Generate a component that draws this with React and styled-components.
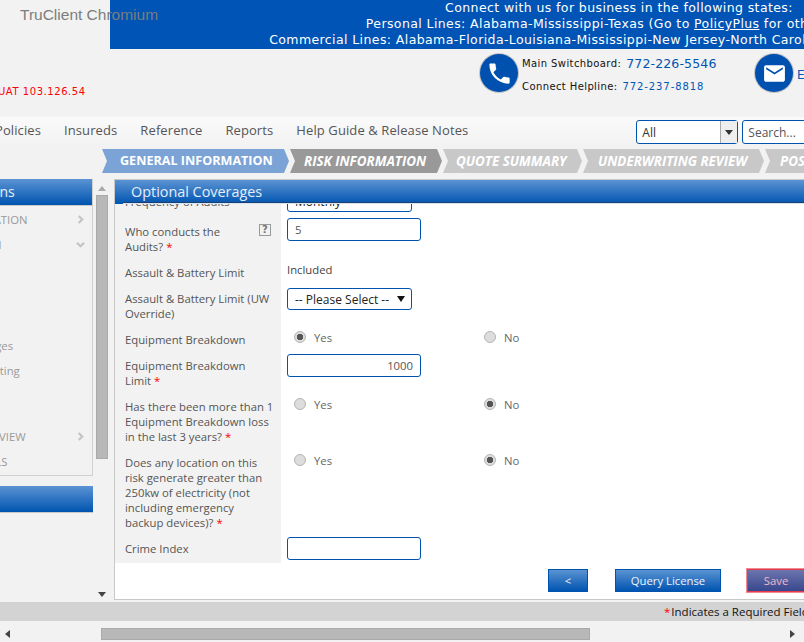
import styled, { createGlobalStyle } from "styled-components";
import { MdPhone, MdEmail } from "react-icons/md";

const GlobalStyle = createGlobalStyle`
  html, body { margin: 0; padding: 0; background: #f2f2f2; overflow: hidden; }
  * { box-sizing: border-box; }
`;

const Viewport = styled.div`
  position: relative;
  width: 804px;
  height: 642px;
  overflow: hidden;
  display: flex;
  flex-direction: column;
  background: #f2f2f2;
  font-family: "Open Sans", sans-serif;
`;
const Page = styled.div`
  width: 1274px;
  margin-left: -141px;
  flex: none;
`;
const WindowTitle = styled.div`
  position: absolute;
  left: 20px;
  top: 5px;
  font: 15.5px/20px "Liberation Sans", sans-serif;
  color: #7d7d7d;
`;
const BannerRow = styled.div`
  display: flex;
  justify-content: flex-end;
`;
const Banner = styled.div`
  width: 1023px;
  height: 49px;
  padding-right: 5px;
  background: #0054b5;
  color: #fff;
  text-align: center;
  font: 12.5px/16px "DejaVu Sans", sans-serif;
  letter-spacing: 0.4px;
  white-space: nowrap;
  a { color: #fff; text-decoration: underline; }
`;
const Band = styled.div`
  height: 68px;
  display: flex;
  padding-left: 139px;
`;
const UatTag = styled.div`
  width: 482px;
  padding-top: 36px;
  font: 10px/13px "DejaVu Sans", sans-serif;
  letter-spacing: 0.55px;
  color: #f00;
`;
const Circle = styled.div`
  width: 38px;
  height: 38px;
  margin-top: 5px;
  border-radius: 50%;
  background: #0050b0;
  box-shadow: 0 0 0 1px #c4c4c4;
  color: #fff;
  display: flex;
  align-items: center;
  justify-content: center;
  flex: none;
`;
const ContactLines = styled.div`
  width: 237px;
  padding: 3px 0 0 4px;
  font: 10px/23px "DejaVu Sans", sans-serif;
  letter-spacing: 0.4px;
  color: #111;
`;
const ContactLine = styled.div`
  display: flex;
  align-items: center;
  gap: 5px;
  white-space: nowrap;
`;
const PhoneNumber = styled.span`
  color: #0054b5;
  font-size: ${(p) => (p.$large ? "12.5px" : "10px")};
  letter-spacing: ${(p) => (p.$large ? "0.15px" : "0.9px")};
`;
const EmailLink = styled.div`
  padding: 18px 0 0 4px;
  font: 12px/16px "DejaVu Sans", sans-serif;
  color: #0054b5;
`;
const Nav = styled.div`
  height: 30px;
  display: flex;
  align-items: center;
  background: linear-gradient(#fafafa, #f2f2f2);
  padding-left: 136px;
`;
const NavItem = styled.div`
  padding-bottom: 4px;
  font-size: 13px;
  letter-spacing: 0.1px;
  color: #555;
  margin-right: 23px;
  white-space: nowrap;
`;
const NavSelect = styled.div`
  width: 102px;
  height: 24px;
  margin-left: 145px;
  display: flex;
  align-items: stretch;
  background: #fff;
  border: 1px solid #0054b0;
  border-radius: 3px;
  font-size: 12px;
  color: #333;
`;
const NavSelectText = styled.div`
  flex: 1;
  padding: 3px 5px;
`;
const NavSelectArrow = styled.div`
  width: 17px;
  background: #eee;
  border-left: 1px solid #aaa;
  display: flex;
  align-items: center;
  justify-content: center;
  &::after {
    content: "";
    border: 4px solid transparent;
    border-top: 5px solid #333;
    border-bottom: 0;
  }
`;
const SearchBox = styled.div`
  width: 120px;
  height: 24px;
  margin-left: 4px;
  padding: 3px 5px;
  background: #fff;
  border: 1px solid #0054b0;
  border-radius: 3px;
  font-size: 12px;
  color: #555;
`;
const Steps = styled.div`
  height: 24px;
  margin-top: 2px;
  padding-left: 243px;
  display: flex;
  gap: 1px;
`;
const Step = styled.div`
  width: ${(p) => p.$width}px;
  padding-left: ${(p) => p.$indent}px;
  background: ${(p) => p.$color};
  clip-path: polygon(0 0, calc(100% - 5px) 0, 100% 50%, calc(100% - 5px) 100%, 0 100%, 5px 50%);
  color: #fff;
  font-size: ${(p) => (p.$plain ? "12.6px" : "13.4px")};
  line-height: 24px;
  font-weight: 700;
  font-style: ${(p) => (p.$plain ? "normal" : "italic")};
  white-space: nowrap;
`;
const Main = styled.div`
  display: flex;
  margin-top: 6px;
  height: 421px;
`;
const Sidebar = styled.div`
  width: 234px;
  flex: none;
`;
const SideCard = styled.div`
  height: 297px;
  background: #f2f2f2;
  border-right: 1px solid #d0d0d0;
  border-bottom: 1px solid #d0d0d0;
`;
const SideHeader = styled.div`
  height: 27px;
  padding-left: 60px;
  background: linear-gradient(#5b93d3, #0054b0);
  border-bottom: 1px solid #c8c8c8;
  color: #e8f0fa;
  font-size: 14px;
  line-height: 26px;
  white-space: nowrap;
`;
const SideList = styled.div`
  padding-top: 1px;
`;
const SideItem = styled.div`
  height: 25px;
  margin-top: ${(p) => p.$gap || 0}px;
  padding: 0 7px 0 ${(p) => (p.$sub ? 51 : 39)}px;
  display: flex;
  align-items: center;
  justify-content: space-between;
  font-size: 11.3px;
  color: #999;
  white-space: nowrap;
`;
const Chevron = styled.svg`
  width: 9px;
  height: 9px;
  fill: none;
  stroke: #c4c4c4;
  stroke-width: 2.4;
`;
const SideSpacer = styled.div`
  height: 10px;
`;
const ScrollRail = styled.div`
  width: 21px;
  flex: none;
  padding: 7px 6px 0 2px;
  display: flex;
  flex-direction: column;
  align-items: center;
`;
const ArrowUp = styled.div`
  border: 4px solid transparent;
  border-bottom: 5px solid #aaa;
  border-top: 0;
`;
const ArrowDown = styled.div`
  margin-top: 133px;
  border: 4px solid transparent;
  border-top: 5px solid #444;
  border-bottom: 0;
`;
const RailThumb = styled.div`
  width: 12px;
  height: 264px;
  margin-top: 4px;
  background: #b8b8b8;
  border: 1px solid #aaa;
`;
const Panel = styled.div`
  flex: 1;
  display: flex;
  flex-direction: column;
  background: #fff;
  border: 1px solid #c8c8c8;
  border-width: 1px 0 1px 1px;
`;
const PanelHeader = styled.div`
  height: 24px;
  flex: none;
  padding-left: 8px;
  background: linear-gradient(#5b93d3, #0054b0);
`;
const PanelTitle = styled.div`
  height: 23px;
  padding-left: 8px;
  border-bottom: 1px solid #1c3f6e;
  box-shadow: 0 1px 0 #d8e4f2;
  color: #e4eefa;
  font-size: 14.4px;
  line-height: 24px;
`;
const FormClip = styled.div`
  height: 359px;
  flex: none;
  overflow: hidden;
`;
const Form = styled.div`
  margin-top: -15px;
  width: 700px;
`;
const Row = styled.div`
  display: grid;
  grid-template-columns: 166px 1fr;
`;
const LabelCell = styled.div`
  display: flex;
  justify-content: space-between;
  align-items: flex-start;
  background: #f2f2f2;
  padding: 5px 5px ${(p) => p.$bottom || 6}px 10px;
  font-size: 11.3px;
  line-height: 15px;
  color: #555;
`;
const LabelText = styled.div`
  max-width: ${(p) => (p.$max ? `${p.$max}px` : "none")};
`;
const Required = styled.span`
  color: #f00;
  margin-left: 3px;
`;
const HelpBox = styled.div`
  width: 12px;
  height: 12px;
  margin: 0 5px 0 0;
  border: 1px solid #999;
  color: #777;
  font: bold 10px/10px "DejaVu Sans", sans-serif;
  text-align: center;
`;
const FieldCell = styled.div`
  padding: ${(p) => p.$top || 0}px 0 0 6px;
  margin-top: ${(p) => p.$shift || 0}px;
`;
const TextBox = styled.div`
  width: 134px;
  height: 23px;
  padding: 0 7px 0 7px;
  background: #fff;
  border: 1px solid #0054b0;
  border-radius: 3px;
  font-size: 11.3px;
  line-height: 21px;
  color: #555;
  text-align: ${(p) => (p.$right ? "right" : "left")};
`;
const SelectBox = styled.div`
  width: 125px;
  height: 22px;
  padding: 0 6px 0 7px;
  display: flex;
  align-items: center;
  justify-content: space-between;
  background: #fff;
  border: 1px solid #0054b0;
  border-radius: 3px;
  font-size: 12px;
  color: #222;
  &::after {
    content: "";
    border: 4px solid transparent;
    border-top: 6px solid #111;
    border-bottom: 0;
  }
`;
const StaticValue = styled.div`
  font-size: 11.3px;
  line-height: 18px;
  color: #444;
`;
const RadioRow = styled.div`
  display: flex;
  align-items: center;
  height: 20px;
`;
const RadioOption = styled.div`
  width: 190px;
  padding-left: 7px;
  display: flex;
  align-items: center;
  gap: 8px;
  font-size: 11.3px;
  color: #666;
`;
const RadioDot = styled.div`
  width: 12px;
  height: 12px;
  border-radius: 50%;
  background: ${(p) => (p.$on ? "radial-gradient(#555 0 3px, #ddd 3.5px)" : "#ddd")};
  border: 1px solid #b4b4b4;
`;
const Actions = styled.div`
  flex: none;
  display: flex;
  padding: 6px 0 0 433px;
`;
const ActionButton = styled.div`
  width: ${(p) => p.$width}px;
  height: 23px;
  margin-right: ${(p) => p.$gap || 0}px;
  background: ${(p) => (p.$active ? "linear-gradient(#6b75ad, #38478e)" : "linear-gradient(#5b93d3, #0054b0)")};
  border: 1px solid ${(p) => (p.$active ? "#e8394a" : "#0054b0")};
  outline: ${(p) => (p.$active ? "1px solid #f08a92" : "none")};
  color: ${(p) => (p.$active ? "#f2b8c4" : "#eef4fb")};
  font-size: 11.3px;
  line-height: 21px;
  text-align: center;
`;
const RequiredBar = styled.div`
  height: 19px;
  margin-top: 2px;
  padding-left: 802px;
  display: flex;
  gap: 1px;
  background: #d3d3d3;
  font-size: 11.5px;
  line-height: 19px;
  color: #111;
  white-space: nowrap;
`;
const HScroll = styled.div`
  height: 21px;
  padding-top: 5px;
  display: flex;
  align-items: center;
`;
const ArrowLeft = styled.div`
  margin-left: 5px;
  border: 4px solid transparent;
  border-right: 5px solid #444;
  border-left: 0;
`;
const HThumb = styled.div`
  width: 489px;
  height: 12px;
  margin-left: 91px;
  background: #b8b8b8;
  border: 1px solid #aaa;
`;
const ArrowRight = styled.div`
  margin-left: 200px;
  border: 4px solid transparent;
  border-left: 5px solid #444;
  border-right: 0;
`;

const steps = [
  { text: "GENERAL INFORMATION", width: 187, indent: 18, color: "#7ca3d6", plain: true },
  { text: "RISK INFORMATION", width: 152, indent: 14, color: "#999999" },
  { text: "QUOTE SUMMARY", width: 139, indent: 13, color: "#c8c8c8" },
  { text: "UNDERWRITING REVIEW", width: 181, indent: 15, color: "#c8c8c8" },
  { text: "POST BIND", width: 140, indent: 15, color: "#c8c8c8" },
];

const ChevronRight = () => (
  <Chevron viewBox="0 0 10 10"><path d="M3 1l4 4-4 4" /></Chevron>
);
const ChevronDown = () => (
  <Chevron viewBox="0 0 10 10"><path d="M1 3l4 4 4-4" /></Chevron>
);

const RadioPair = ({ yes }) => (
  <RadioRow>
    <RadioOption><RadioDot $on={yes} />Yes</RadioOption>
    <RadioOption><RadioDot $on={!yes} />No</RadioOption>
  </RadioRow>
);

export default function App() {
  return (
    <Viewport>
      <GlobalStyle />
      <Page>
        <BannerRow>
          <Banner>
            <div>Connect with us for business in the following states:</div>
            <div>Personal Lines: Alabama-Mississippi-Texas (Go to <a>PolicyPlus</a> for other states)</div>
            <div>Commercial Lines: Alabama-Florida-Louisiana-Mississippi-New Jersey-North Carolina-South Carolina-Texas</div>
          </Banner>
        </BannerRow>
        <Band>
          <UatTag>UAT 103.126.54</UatTag>
          <Circle><MdPhone size={27} /></Circle>
          <ContactLines>
            <ContactLine>Main Switchboard: <PhoneNumber $large>772-226-5546</PhoneNumber></ContactLine>
            <ContactLine>Connect Helpline: <PhoneNumber>772-237-8818</PhoneNumber></ContactLine>
          </ContactLines>
          <Circle><MdEmail size={25} /></Circle>
          <EmailLink>Email Us</EmailLink>
        </Band>
        <Nav>
          <NavItem>Policies</NavItem>
          <NavItem>Insureds</NavItem>
          <NavItem>Reference</NavItem>
          <NavItem>Reports</NavItem>
          <NavItem>Help Guide &amp; Release Notes</NavItem>
          <NavSelect>
            <NavSelectText>All</NavSelectText>
            <NavSelectArrow />
          </NavSelect>
          <SearchBox>Search...</SearchBox>
        </Nav>
        <Steps>
          {steps.map((s) => (
            <Step key={s.text} $width={s.width} $indent={s.indent} $color={s.color} $plain={s.plain}>
              {s.text}
            </Step>
          ))}
        </Steps>
        <Main>
          <Sidebar>
            <SideCard>
              <SideHeader>Policy Sections</SideHeader>
              <SideList>
                <SideItem>GENERAL INFORMATION <ChevronRight /></SideItem>
                <SideItem>RISK INFORMATION <ChevronDown /></SideItem>
                <SideItem $sub $gap={76}>Optional Coverages</SideItem>
                <SideItem $sub>Agency Underwriting</SideItem>
                <SideItem $gap={41}>UNDERWRITING REVIEW <ChevronRight /></SideItem>
                <SideItem>DOCUMENT DETAILS</SideItem>
              </SideList>
            </SideCard>
            <SideSpacer />
            <SideHeader />
          </Sidebar>
          <ScrollRail>
            <ArrowUp />
            <RailThumb />
            <ArrowDown />
          </ScrollRail>
          <Panel>
            <PanelHeader><PanelTitle>Optional Coverages</PanelTitle></PanelHeader>
            <FormClip>
              <Form>
                <Row>
                  <LabelCell $bottom={10}><LabelText>Frequency of Audits</LabelText></LabelCell>
                  <FieldCell $top={1}><SelectBox>Monthly</SelectBox></FieldCell>
                </Row>
                <Row>
                  <LabelCell>
                    <LabelText $max={125}>Who conducts the Audits?<Required>*</Required></LabelText>
                    <HelpBox>?</HelpBox>
                  </LabelCell>
                  <FieldCell $shift={-1}><TextBox>5</TextBox></FieldCell>
                </Row>
                <Row>
                  <LabelCell><LabelText>Assault &amp; Battery Limit</LabelText></LabelCell>
                  <FieldCell $top={1}><StaticValue>Included</StaticValue></FieldCell>
                </Row>
                <Row>
                  <LabelCell><LabelText>Assault &amp; Battery Limit (UW Override)</LabelText></LabelCell>
                  <FieldCell $top={2}><SelectBox>-- Please Select --</SelectBox></FieldCell>
                </Row>
                <Row>
                  <LabelCell><LabelText>Equipment Breakdown</LabelText></LabelCell>
                  <FieldCell><RadioPair yes /></FieldCell>
                </Row>
                <Row>
                  <LabelCell><LabelText>Equipment Breakdown Limit<Required>*</Required></LabelText></LabelCell>
                  <FieldCell $top={1}><TextBox $right>1000</TextBox></FieldCell>
                </Row>
                <Row>
                  <LabelCell><LabelText>Has there been more than 1 Equipment Breakdown loss in the last 3 years?<Required>*</Required></LabelText></LabelCell>
                  <FieldCell><RadioPair /></FieldCell>
                </Row>
                <Row>
                  <LabelCell><LabelText $max={142}>Does any location on this risk generate greater than 250kw of electricity (not including emergency backup devices)?<Required>*</Required></LabelText></LabelCell>
                  <FieldCell><RadioPair /></FieldCell>
                </Row>
                <Row>
                  <LabelCell $bottom={7}><LabelText>Crime Index</LabelText></LabelCell>
                  <FieldCell $top={1}><TextBox /></FieldCell>
                </Row>
              </Form>
            </FormClip>
            <Actions>
              <ActionButton $width={40} $gap={27}>&lt;</ActionButton>
              <ActionButton $width={106} $gap={26}>Query License</ActionButton>
              <ActionButton $width={58} $active>Save</ActionButton>
            </Actions>
          </Panel>
        </Main>
        <RequiredBar><Required>*</Required><span>Indicates a Required Field</span></RequiredBar>
      </Page>
      <HScroll>
        <ArrowLeft />
        <HThumb />
        <ArrowRight />
      </HScroll>
      <WindowTitle>TruClient Chromium</WindowTitle>
    </Viewport>
  );
}
